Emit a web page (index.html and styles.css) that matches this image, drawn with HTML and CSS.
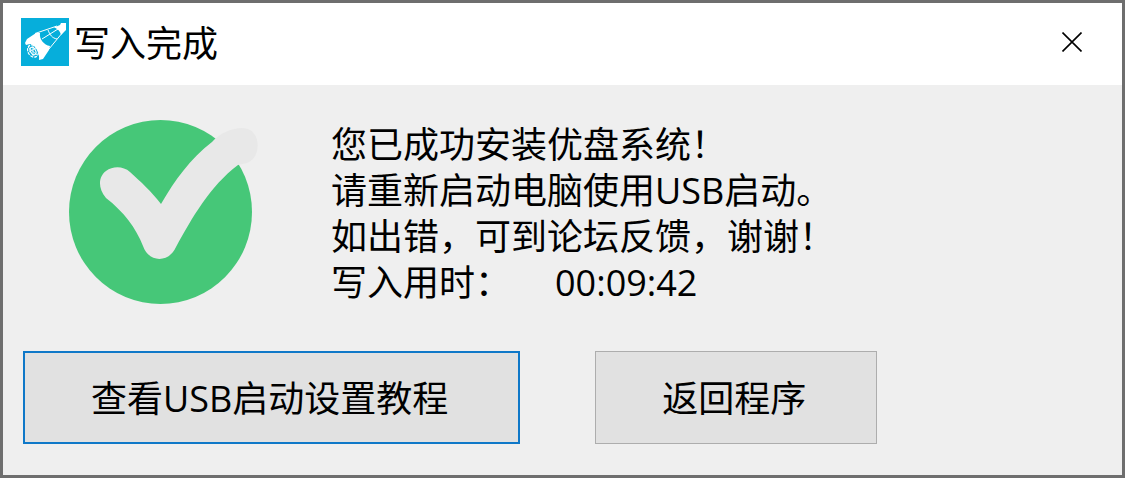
FILE: index.html
```html
<!DOCTYPE html>
<html lang="zh-CN">
<head>
  <meta charset="UTF-8">
  <meta name="viewport" content="width=device-width, initial-scale=1">
  <title>写入完成</title>
  <link rel="stylesheet" href="styles.css">
</head>
<body>

  <div class="window">
    <header class="titlebar">
      <svg class="logo" viewBox="0 0 48 48" aria-hidden="true">
        <rect width="48" height="48" fill="#06aedb"/>
        <!-- nose and body -->
        <path d="M33 9.500 L39 7 L40 5 L45 5 L45 12 L42 15 L40 17 C39 13 37 11 33 9.500 Z" fill="#fff"/>
        <path d="M4 25 L6 21 L15 15 L19 15 C18 21 23 27 29 28 L28 32 L22 41 L18 42 C19 36 15 27 9 26 L5 27 Z" fill="#fff"/>
        <path d="M14 15.500 L36 8 M28 31 L42 14" fill="none" stroke="#fff" stroke-width="1"/>
        <path d="M21 21 L37 11 M27 12 C29 17 31 20 36 21" fill="none" stroke="#fff" stroke-width="1"/>
        <!-- engine -->
        <ellipse cx="12" cy="33" rx="5" ry="6.500" transform="rotate(-30 12 33)" fill="none" stroke="#fff" stroke-width="1.200" stroke-dasharray="3 1"/>
        <ellipse cx="12" cy="33" rx="2.500" ry="4" transform="rotate(-30 12 33)" fill="none" stroke="#fff" stroke-width="1.200"/>
        <path d="M7 29 L16 37 M8 34 L15 30 M12 28 L12 38" stroke="#fff" stroke-width="0.800"/>
      </svg>
      <h1 class="title">写入完成</h1>
      <button class="close" type="button" aria-label="关闭">
        <svg width="20" height="20" viewBox="0 0 20 20" aria-hidden="true">
          <path d="M0.500 0.500 L19.500 19.500 M19.500 0.500 L0.500 19.500" stroke="#000" stroke-width="1.600"/>
        </svg>
      </button>
    </header>

    <main class="content">
      <div class="message">
        <svg class="success" viewBox="0 0 190 184" aria-hidden="true">
          <ellipse cx="91.500" cy="92" rx="91.500" ry="92" fill="#46c778"/>
          <path d="M37 51 C30 56 28 67 37 78 C55 92 67 108 74 126 C80 143 100 143 107 127 C123 98 141 66 169 45 L178 43 C193 38 193 8 173 8 C163 8 151 13 143 22 C121 39 106 60 92 84 C82 71 72 62 61 52 C54 46 44 46 37 51 Z" fill="#e8e8e8"/>
        </svg>
        <div class="text">
          <p>您已成功安装优盘系统！</p>
          <p>请重新启动电脑使用USB启动。</p>
          <p>如出错，可到论坛反馈，谢谢！</p>
          <p class="elapsed"><span>写入用时：</span><time>00:09:42</time></p>
        </div>
      </div>

      <div class="buttons">
        <button class="btn btn-default" type="button">查看USB启动设置教程</button>
        <button class="btn" type="button">返回程序</button>
      </div>
    </main>
  </div>

</body>
</html>
```
FILE: styles.css
```css
* {
  box-sizing: border-box;
}

body {
  margin: 0;
  background: #efefef;
  color: #000;
  font-family: "Open Sans", "Noto Sans CJK SC", sans-serif;
  font-size: 36px;
  line-height: 46px;
}

.window {
  display: flex;
  flex-direction: column;
  min-height: 100vh;
  border: 3px solid #6e6e6e;
}

/* Title bar */
.titlebar {
  display: flex;
  align-items: center;
  gap: 5px;
  padding: 14px 18px 18px;
  background: #fff;
}

.logo {
  flex: none;
  width: 48px;
  height: 48px;
}

.title {
  margin: 0;
  padding-top: 4px;
  font-size: 36px;
  font-weight: 400;
}

.close {
  display: flex;
  align-items: center;
  justify-content: center;
  width: 64px;
  height: 48px;
  margin-left: auto;
  padding: 0;
  border: 0;
  background: transparent;
}

/* Message */
.content {
  flex: 1;
  padding: 35px 20px 28px;
}

.message {
  display: flex;
  align-items: flex-start;
  gap: 72px;
  padding-left: 46px;
}

.success {
  flex: none;
  width: 190px;
  height: 184px;
}

.text {
  padding-top: 2px;
}

.text p {
  margin: 0;
}

.elapsed {
  display: flex;
  gap: 44px;
}

/* Buttons */
.buttons {
  display: flex;
  flex-wrap: wrap;
  gap: 75px;
  margin-top: 45px;
}

.btn {
  min-height: 93px;
  padding: 2px 70px 0 66px;
  border: 1px solid #adadad;
  border-radius: 0;
  background: #e1e1e1;
  color: #000;
  font: inherit;
}

.btn-default {
  border: 2px solid #0f78c8;
}

.btn:hover {
  background: #e5f1fb;
}
```
